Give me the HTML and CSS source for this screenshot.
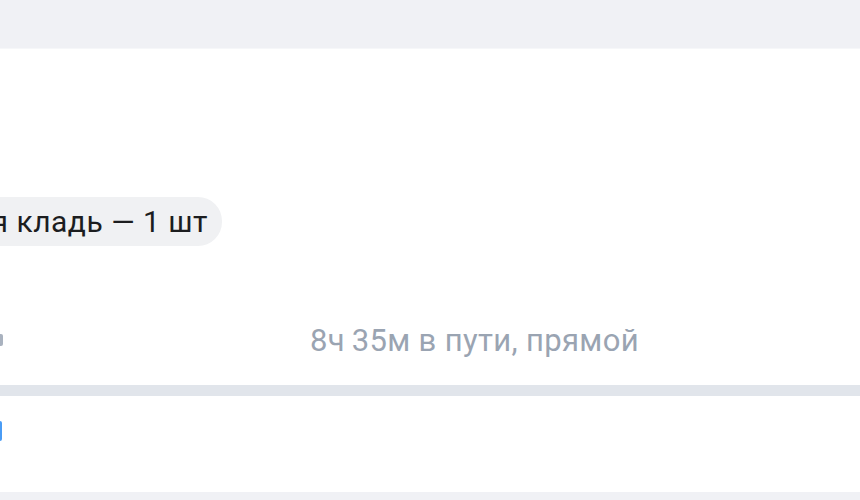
FILE: index.html
```html
<!DOCTYPE html>
<html lang="ru">
<head>
<meta charset="utf-8">
<link rel="stylesheet" href="styles.css">
</head>
<body>
<div class="page">
  <div class="top-band"></div>
  <section class="card card-main">
    <div class="bag-row">
      <span class="pill">Ручная кладь — 1 шт</span>
    </div>
    <div class="info-row">
      <span class="edge-gray"></span>
      <span class="duration">8ч&#8201;35м в пути, прямой</span>
    </div>
  </section>
  <div class="divider"></div>
  <section class="card card-link">
    <span class="edge-blue"></span>
  </section>
  <div class="bottom-band"></div>
</div>
</body>
</html>
```

FILE: styles.css
```css
html, body {
  margin: 0;
  padding: 0;
  background: #f0f1f5;
  overflow: hidden;
  width: 860px;
  height: 500px;
}
.page {
  display: flex;
  flex-direction: column;
  font-family: Roboto, "Noto Sans", sans-serif;
}
.top-band {
  height: 48px;
  background: #f0f1f5;
  border-bottom: 1px solid #f6f7f9;
}
.card {
  background: #ffffff;
}
.card-main {
  height: 336px;
  display: flex;
  flex-direction: column;
}
.bag-row {
  display: flex;
  justify-content: flex-end;
  width: 222px;
  margin-top: 148px;
}
.pill {
  flex-shrink: 0;
  display: inline-flex;
  align-items: center;
  height: 49px;
  border-radius: 24px;
  background: #f0f1f3;
  padding: 0 14px 0 24px;
  font-size: 30px;
  letter-spacing: 0.5px;
  color: #1c1d1f;
  white-space: nowrap;
}
.info-row {
  display: flex;
  align-items: center;
  margin-top: 74px;
  height: 40px;
}
.edge-gray {
  width: 3px;
  height: 12px;
  background: #a9b2bf;
  border-radius: 0 2px 2px 0;
}
.duration {
  margin-left: 307px;
  font-size: 31px;
  letter-spacing: 0.35px;
  color: #9aa4b2;
  white-space: nowrap;
}
.divider {
  height: 11px;
  background: #e1e5eb;
}
.card-link {
  height: 96px;
  display: flex;
  align-items: center;
}
.edge-blue {
  width: 2px;
  height: 20px;
  background: #4a9cf5;
  border-radius: 0 2px 2px 0;
  margin-top: -26px;
}
.bottom-band {
  height: 8px;
  background: #f0f1f5;
}
```
